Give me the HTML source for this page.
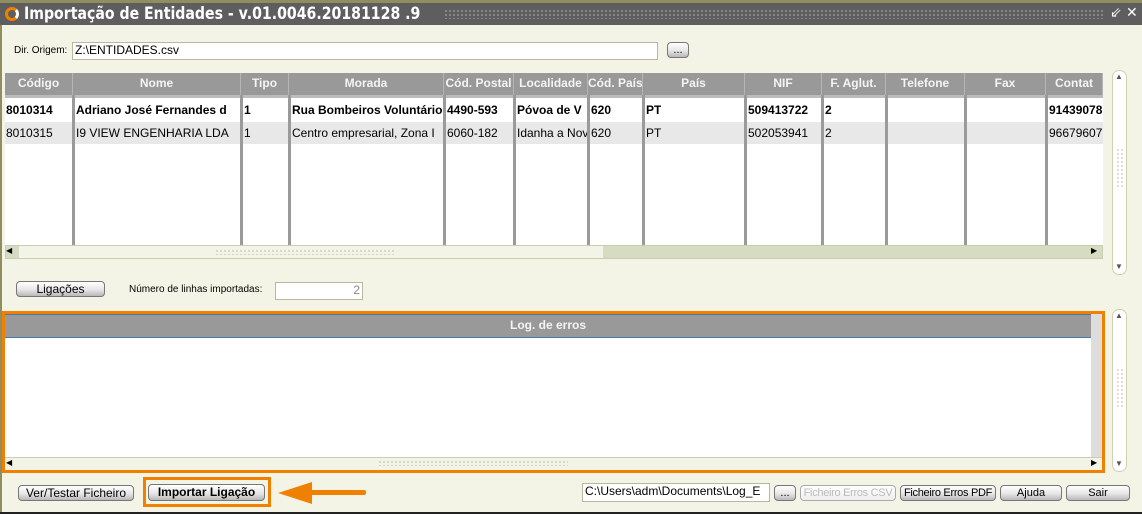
<!DOCTYPE html><html><head><meta charset="utf-8"><style>
*{box-sizing:border-box;margin:0;padding:0}
body{width:1142px;height:514px;overflow:hidden;background:#f4f4e6;font-family:"Liberation Sans",sans-serif;position:relative;font-size:12px}
.a{position:absolute}
.btn{position:absolute;border:1px solid #777;border-radius:4px;background:linear-gradient(#fff,#e6e6e6 55%,#b8b8b8);font-size:11px;text-align:center;line-height:14px;color:#000;white-space:nowrap;overflow:hidden}
.inp{position:absolute;background:#fff;border:1px solid #b8b89a;font-size:12px;line-height:15px;padding-left:2px}
.hd{position:absolute;top:73px;height:22px;background:#999;color:#f4f4f4;font-weight:bold;font-size:12px;text-align:center;line-height:21px;border-right:1px solid #b5b5b5;overflow:hidden;white-space:nowrap}
.c{position:absolute;font-size:12px;white-space:nowrap;overflow:hidden;padding-left:1px}
.vl{position:absolute;top:95px;height:150px;width:3px;background:#9a9a9a}
.dots{background-image:radial-gradient(#888 0.6px,transparent 0.8px);background-size:4px 4px}
</style></head><body>
<div class="a" style="left:0;top:0;width:1142px;height:3px;background:#8e8e60"></div>
<div class="a" style="left:0;top:3px;width:1142px;height:22px;background:#5e5e5e"></div>
<div class="a" style="left:5px;top:7px;width:14px;height:14px;border-radius:50%;border:3px solid #f08000;border-right-color:#fff"></div>
<div class="a" style="left:24px;top:4px;color:#fff;font-weight:bold;font-size:17px;font-family:'DejaVu Sans',sans-serif;transform:scaleX(0.83);transform-origin:0 0;white-space:nowrap">Importação de Entidades - v.01.0046.20181128 .9</div>
<div class="a dots" style="left:444px;top:9px;width:660px;height:10px;background-image:radial-gradient(#aaa 0.7px,transparent 0.9px)"></div>
<div class="a" style="left:1110px;top:4px;color:#fff;font-size:14px">⇙</div>
<div class="a" style="left:1126px;top:4px;color:#fff;font-size:14px">✕</div>
<div class="a" style="left:0;top:25px;width:2px;height:489px;background:#8e8e60"></div>
<div class="a" style="left:14px;top:45px;font-size:10px">Dir. Origem:</div>
<div class="inp" style="left:72px;top:42px;width:586px;height:18px">Z:\ENTIDADES.csv</div>
<div class="btn" style="left:667px;top:42px;width:22px;height:16px">...</div>
<div class="a" style="left:5px;top:73px;width:1098px;height:185px;background:#fff"></div>
<div class="hd" style="left:5px;width:68px">Código</div><div class="hd" style="left:73px;width:168px">Nome</div><div class="hd" style="left:241px;width:48px">Tipo</div><div class="hd" style="left:289px;width:155px">Morada</div><div class="hd" style="left:444px;width:70px">Cód. Postal</div><div class="hd" style="left:514px;width:74px">Localidade</div><div class="hd" style="left:588px;width:55px">Cód. País</div><div class="hd" style="left:643px;width:102px">País</div><div class="hd" style="left:745px;width:77px">NIF</div><div class="hd" style="left:822px;width:64px">F. Aglut.</div><div class="hd" style="left:886px;width:79px">Telefone</div><div class="hd" style="left:965px;width:81px">Fax</div><div class="hd" style="left:1046px;width:57px">Contat</div>
<div class="a" style="left:5px;top:95px;width:1098px;height:3px;background:#bbb"></div>
<div class="a" style="left:5px;top:122px;width:1098px;height:22px;background:#e8e8e8"></div>
<div class="vl" style="left:72px"></div><div class="vl" style="left:240px"></div><div class="vl" style="left:288px"></div><div class="vl" style="left:443px"></div><div class="vl" style="left:513px"></div><div class="vl" style="left:587px"></div><div class="vl" style="left:642px"></div><div class="vl" style="left:744px"></div><div class="vl" style="left:821px"></div><div class="vl" style="left:885px"></div><div class="vl" style="left:964px"></div><div class="vl" style="left:1045px"></div>
<div style="font-weight:bold">
<div class="c" style="left:5px;top:103px;width:67px">8010314</div><div class="c" style="left:75px;top:103px;width:165px">Adriano José Fernandes d</div><div class="c" style="left:243px;top:103px;width:45px">1</div><div class="c" style="left:291px;top:103px;width:152px">Rua Bombeiros Voluntários</div><div class="c" style="left:446px;top:103px;width:67px">4490-593</div><div class="c" style="left:516px;top:103px;width:71px">Póvoa de V</div><div class="c" style="left:590px;top:103px">620</div><div class="c" style="left:645px;top:103px">PT</div><div class="c" style="left:747px;top:103px">509413722</div><div class="c" style="left:824px;top:103px">2</div><div class="c" style="left:1048px;top:103px;width:55px">91439078</div></div>
<div class="c" style="left:5px;top:126px;width:67px">8010315</div><div class="c" style="left:75px;top:126px;width:165px">I9 VIEW ENGENHARIA LDA</div><div class="c" style="left:243px;top:126px">1</div><div class="c" style="left:291px;top:126px;width:152px">Centro empresarial, Zona I</div><div class="c" style="left:446px;top:126px">6060-182</div><div class="c" style="left:516px;top:126px;width:71px">Idanha a Nova</div><div class="c" style="left:590px;top:126px">620</div><div class="c" style="left:645px;top:126px">PT</div><div class="c" style="left:747px;top:126px">502053941</div><div class="c" style="left:824px;top:126px">2</div><div class="c" style="left:1048px;top:126px;width:55px">96679607</div>
<div class="a" style="left:5px;top:245px;width:1098px;height:14px;background:#d6dcc2;border:1px solid #c8cfb0"></div>
<div class="a" style="left:19px;top:246px;width:584px;height:12px;background:#f4f4e6"></div>
<div class="a dots" style="left:215px;top:249px;width:180px;height:6px"></div>
<div class="a" style="left:6px;top:246px;font-size:8px">◀</div><div class="a" style="left:1091px;top:246px;font-size:8px">▶</div>
<div class="a" style="left:1112px;top:70px;width:15px;height:205px;border:1px solid #cfd2b0;border-radius:7px;background:#fff"></div>
<div class="a" style="left:1115px;top:72px;font-size:8px;color:#555">▲</div><div class="a" style="left:1115px;top:262px;font-size:8px;color:#555">▼</div>
<div class="a dots" style="left:1116px;top:148px;width:7px;height:40px"></div>
<div class="btn" style="left:16px;top:281px;width:89px;height:16px;font-size:12px">Ligações</div>
<div class="a" style="left:129px;top:284px;font-size:10px">Número de linhas importadas:</div>
<div class="inp" style="left:275px;top:282px;width:88px;height:18px;text-align:right;padding-right:2px;color:#888">2</div>
<div class="a" style="left:2px;top:311px;width:1103px;height:162px;border:3px solid #f08000;background:#fff"></div>
<div class="a" style="left:5px;top:314px;width:1086px;height:24px;background:#999;border-top:1px solid #4a79b0;border-bottom:1px solid #4a79b0;color:#f4f4f4;font-weight:bold;text-align:center;line-height:21px">Log. de erros</div>
<div class="a" style="left:1091px;top:314px;width:11px;height:143px;background:#ddd"></div>
<div class="a" style="left:5px;top:457px;width:1097px;height:13px;background:#f4f4e6;border-top:1px solid #c8cfb0"></div>
<div class="a dots" style="left:378px;top:460px;width:190px;height:6px"></div>
<div class="a" style="left:6px;top:458px;font-size:8px">◀</div><div class="a" style="left:1091px;top:458px;font-size:8px">▶</div>
<div class="a" style="left:1112px;top:309px;width:15px;height:163px;border:1px solid #cfd2b0;border-radius:7px;background:#fff"></div>
<div class="a" style="left:1115px;top:311px;font-size:8px;color:#555">▲</div><div class="a" style="left:1115px;top:459px;font-size:8px;color:#555">▼</div>
<div class="a dots" style="left:1116px;top:368px;width:7px;height:40px"></div>
<div class="btn" style="left:18px;top:485px;width:116px;height:16px;font-size:12px">Ver/Testar Ficheiro</div>
<div class="a" style="left:143px;top:477px;width:128px;height:30px;border:3px solid #f08000"></div>
<div class="btn" style="left:148px;top:484px;width:117px;height:17px;font-size:12px;font-weight:bold">Importar Ligação</div>
<div class="a" style="left:300px;top:490px;width:66px;height:5px;background:#f08000;border-radius:2px"></div>
<div class="a" style="left:278px;top:482px;width:0;height:0;border-top:11px solid transparent;border-bottom:11px solid transparent;border-right:34px solid #f08000"></div>
<div class="inp" style="left:582px;top:483px;width:188px;height:19px;overflow:hidden;white-space:nowrap">C:\Users\adm\Documents\Log_E</div>
<div class="btn" style="left:774px;top:485px;width:22px;height:16px">...</div>
<div class="btn" style="left:800px;top:485px;width:96px;height:16px;color:#bbb;border-color:#aaa;background:linear-gradient(#fff,#eee);letter-spacing:-0.3px">Ficheiro Erros CSV</div>
<div class="btn" style="left:900px;top:485px;width:96px;height:16px;letter-spacing:-0.3px">Ficheiro Erros PDF</div>
<div class="btn" style="left:1000px;top:485px;width:62px;height:16px">Ajuda</div>
<div class="btn" style="left:1066px;top:485px;width:64px;height:16px">Sair</div>
<div class="a" style="left:0;top:512px;width:1142px;height:2px;background:#222"></div>
</body></html>
